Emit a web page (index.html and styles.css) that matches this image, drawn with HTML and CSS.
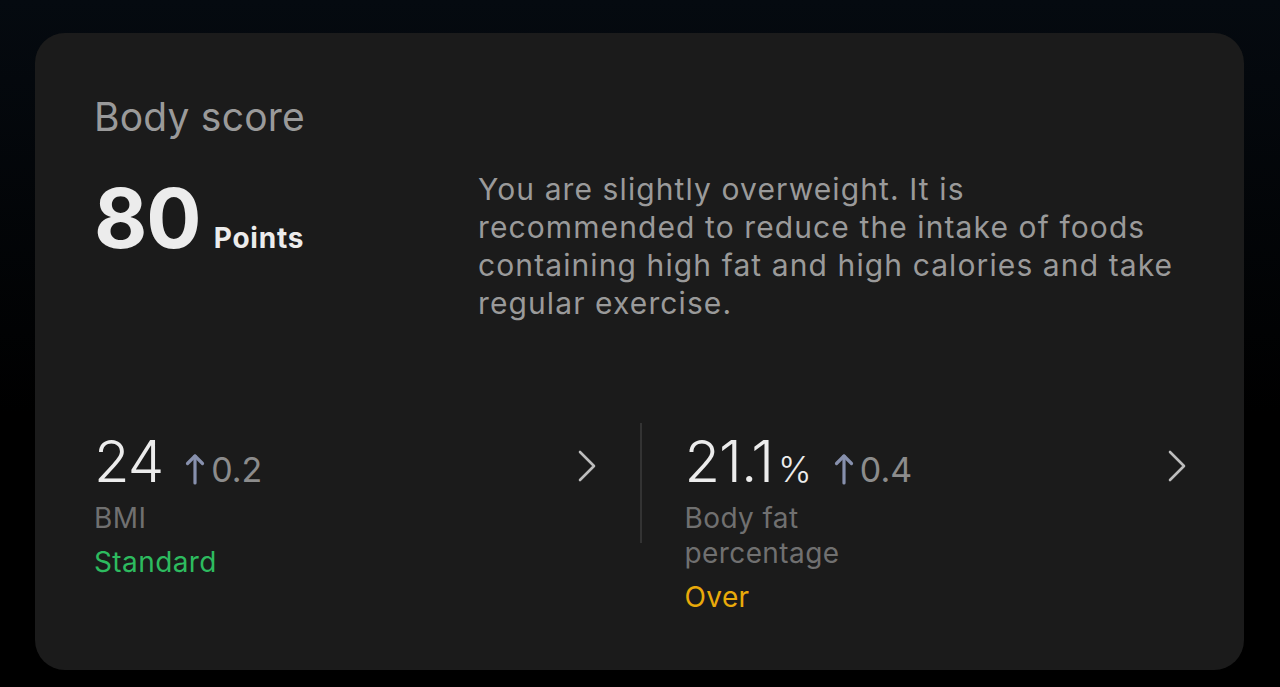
FILE: index.html
```html
<!DOCTYPE html>
<html lang="en">
<head>
    <meta charset="UTF-8">
    <meta name="viewport" content="width=device-width, initial-scale=1.0">
    <title>Body score</title>
    <link rel="stylesheet" href="styles.css">
</head>
<body>
    <main class="card">
        <section class="summary">
            <div class="score-block">
                <h1 class="title">Body score</h1>
                <div class="score">
                    <span class="score-value">80</span>
                    <span class="score-unit">Points</span>
                </div>
            </div>
            <p class="advice">You are slightly overweight. It is recommended to reduce the intake of foods containing high fat and high calories and take regular exercise.</p>
        </section>
        <section class="metrics">
            <div class="metric">
                <div class="metric-body">
                    <div class="metric-value">
                        <span class="value">24</span>
                        <span class="trend">
                            <svg width="20" height="32" viewBox="0 0 20 32" fill="none" stroke="currentColor" stroke-width="3.2" stroke-linecap="round" stroke-linejoin="round">
                                <line x1="10" y1="3" x2="10" y2="30"></line>
                                <polyline points="2.5 10.5 10 3 17.5 10.5"></polyline>
                            </svg>
                            0.2
                        </span>
                    </div>
                    <div class="metric-label">BMI</div>
                    <div class="metric-status standard">Standard</div>
                </div>
                <svg class="chevron" width="20" height="32" viewBox="0 0 20 32" fill="none" stroke="currentColor" stroke-width="2.6" stroke-linecap="round" stroke-linejoin="round">
                    <polyline points="3 2 17 16 3 30"></polyline>
                </svg>
            </div>
            <div class="divider"></div>
            <div class="metric">
                <div class="metric-body">
                    <div class="metric-value">
                        <span class="value">21.1<small>%</small></span>
                        <span class="trend">
                            <svg width="20" height="32" viewBox="0 0 20 32" fill="none" stroke="currentColor" stroke-width="3.2" stroke-linecap="round" stroke-linejoin="round">
                                <line x1="10" y1="3" x2="10" y2="30"></line>
                                <polyline points="2.5 10.5 10 3 17.5 10.5"></polyline>
                            </svg>
                            0.4
                        </span>
                    </div>
                    <div class="metric-label narrow">Body fat percentage</div>
                    <div class="metric-status over">Over</div>
                </div>
                <svg class="chevron" width="20" height="32" viewBox="0 0 20 32" fill="none" stroke="currentColor" stroke-width="2.6" stroke-linecap="round" stroke-linejoin="round">
                    <polyline points="3 2 17 16 3 30"></polyline>
                </svg>
            </div>
        </section>
    </main>
</body>
</html>
```

FILE: styles.css
```css
:root {
    --card: #1b1b1b;
    --text-strong: #ececec;
    --text-muted: #9a9a9a;
    --text-dim: #707070;
    --trend: #8790ad;
    --green: #2dbb5f;
    --yellow: #e9aa0a;
}
html, body {
    margin: 0;
    padding: 0;
    height: 100%;
}
body {
    background: linear-gradient(180deg, #050a10 0%, #000000 60%);
    font-family: 'Inter', 'Noto Sans', sans-serif;
    color: var(--text-strong);
    padding: 33px 36px 0 35px;
    box-sizing: border-box;
    overflow: hidden;
}
.card {
    background: var(--card);
    border-radius: 30px;
    height: 637px;
    box-sizing: border-box;
    padding: 92px 57px 0 59px;
}
.summary {
    display: flex;
    align-items: flex-start;
}
.score-block {
    width: 384px;
    flex-shrink: 0;
}
.title {
    margin: -30px 0 0;
    font-size: 39px;
    font-weight: 400;
    color: var(--text-muted);
    line-height: 44px;
    letter-spacing: 0.2px;
}
.score {
    display: flex;
    align-items: baseline;
    gap: 13px;
    margin-top: 40px;
}
.score-value {
    font-size: 82px;
    font-weight: 700;
    line-height: 80px;
    letter-spacing: -1px;
}
.score-unit {
    font-size: 28px;
    font-weight: 700;
    letter-spacing: 0.8px;
}
.advice {
    width: 700px;
    margin: 45px 0 0;
    font-size: 30px;
    line-height: 38px;
    color: var(--text-muted);
    letter-spacing: 1.1px;
}
.metrics {
    display: flex;
    align-items: flex-start;
    margin-top: 104px;
}
.metric {
    flex: 1;
    display: flex;
    justify-content: space-between;
    align-items: flex-start;
}
.metric-value {
    display: flex;
    align-items: baseline;
    gap: 22px;
    height: 75px;
}
.value {
    font-size: 58px;
    font-weight: 300;
    letter-spacing: -1px;
}
.value small {
    font-size: 36px;
    letter-spacing: 0;
    margin-left: 5px;
}
.trend {
    display: inline-flex;
    align-items: baseline;
    gap: 6px;
    font-size: 34px;
    font-weight: 400;
    color: #8c8c8c;
}
.trend svg {
    color: var(--trend);
    align-self: center;
    margin-top: -2px;
}
.metric-label {
    font-size: 28px;
    line-height: 35px;
    color: var(--text-dim);
    letter-spacing: 0.4px;
}
.metric-label.narrow {
    width: 180px;
}
.metric-status {
    font-size: 28px;
    line-height: 36px;
    margin-top: 8px;
    letter-spacing: 0.4px;
}
.standard {
    color: var(--green);
}
.over {
    color: var(--yellow);
}
.chevron {
    color: #bdbdbd;
    margin-top: 24px;
}
.divider {
    width: 2px;
    height: 120px;
    background: #333333;
    margin: -3px 43px 0 43px;
    flex-shrink: 0;
}
```
